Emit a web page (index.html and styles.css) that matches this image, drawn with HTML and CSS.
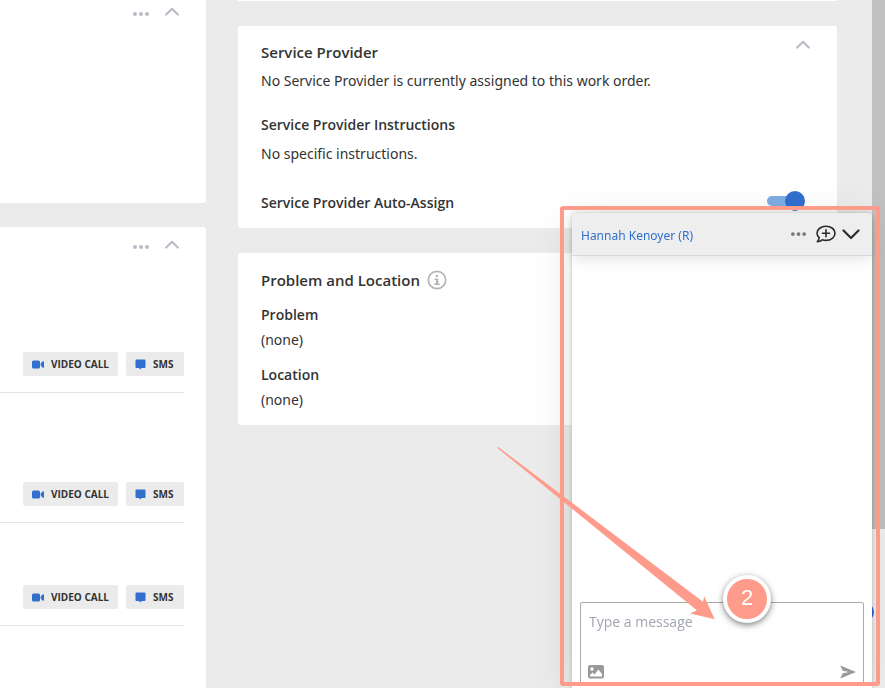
FILE: index.html
```html
<!DOCTYPE html>
<html lang="en">
<head>
<meta charset="utf-8">
<meta name="viewport" content="width=device-width, initial-scale=1">
<title>Work order</title>
<link rel="stylesheet" href="styles.css">
</head>
<body>
<svg class="sprite" aria-hidden="true">
  <symbol id="dots" viewBox="0 0 16 4"><circle cx="2" cy="2" r="2"/><circle cx="8" cy="2" r="2"/><circle cx="14" cy="2" r="2"/></symbol>
  <symbol id="up" viewBox="0 0 14 9"><path d="M1.200 7.500 7 1.800l5.800 5.700" fill="none" stroke="currentColor" stroke-width="2.200" stroke-linecap="round" stroke-linejoin="round"/></symbol>
  <symbol id="video" viewBox="0 0 12 9"><rect x="0" y="0.500" width="8" height="8" rx="1.500"/><path d="M8.700 3.300 10.900 1.300q1.100-.5 1.100.5v5.400q0 1-1.100.5L8.700 5.700z"/></symbol>
  <symbol id="sms" viewBox="0 0 11 11"><path d="M1.500 0.500h8q1 0 1 1v6.500q0 1-1 1H6.500L5.200 10.600 4 9H1.500q-1 0-1-1V1.500q0-1 1-1z"/></symbol>
</svg>
<div class="page">
  <aside class="side">
    <section class="panel panel-short">
      <div class="tools">
        <button class="icon" aria-label="More"><svg width="16" height="4"><use href="#dots"/></svg></button>
        <button class="icon" aria-label="Collapse"><svg width="14" height="9"><use href="#up"/></svg></button>
      </div>
    </section>
    <section class="panel panel-contacts">
      <div class="tools">
        <button class="icon" aria-label="More"><svg width="16" height="4"><use href="#dots"/></svg></button>
        <button class="icon" aria-label="Collapse"><svg width="14" height="9"><use href="#up"/></svg></button>
      </div>
      <div class="contact">
        <button class="action"><svg width="12" height="9"><use href="#video"/></svg>VIDEO CALL</button>
        <button class="action"><svg width="11" height="11"><use href="#sms"/></svg>SMS</button>
      </div>
      <div class="contact">
        <button class="action"><svg width="12" height="9"><use href="#video"/></svg>VIDEO CALL</button>
        <button class="action"><svg width="11" height="11"><use href="#sms"/></svg>SMS</button>
      </div>
      <div class="contact contact-compact">
        <button class="action"><svg width="12" height="9"><use href="#video"/></svg>VIDEO CALL</button>
        <button class="action"><svg width="11" height="11"><use href="#sms"/></svg>SMS</button>
      </div>
    </section>
  </aside>
  <main class="main">
    <div class="card-end"></div>
    <section class="card">
      <div class="card-head">
        <h2>Service Provider</h2>
        <button class="icon" aria-label="Collapse"><svg width="14" height="9"><use href="#up"/></svg></button>
      </div>
      <p class="spaced">No Service Provider is currently assigned to this work order.</p>
      <h3 class="group">Service Provider Instructions</h3>
      <p class="spaced">No specific instructions.</p>
      <div class="assign">
        <label for="auto">Service Provider Auto-Assign</label>
        <input id="auto" class="toggle" type="checkbox" checked>
      </div>
    </section>
    <section class="card">
      <div class="card-head card-head-info">
        <h2>Problem and Location</h2>
        <svg class="info" width="20" height="20" viewBox="0 0 20 20"><circle cx="10" cy="10" r="8.700" fill="none" stroke="currentColor" stroke-width="1.700"/><path d="M8.800 5h2.400v2H8.800zM7.500 8.500h3.700v5h1.500V15H7.300v-1.500h1.600V10H7.500z" fill="currentColor"/></svg>
      </div>
      <h3 class="field">Problem</h3>
      <p class="value">(none)</p>
      <h3 class="field">Location</h3>
      <p class="value">(none)</p>
    </section>
  </main>
  <div class="scrollbar"><div class="thumb"></div></div>
</div>
<div class="peek"></div>
<section class="chat">
  <header class="chat-head">
    <a href="#chat">Hannah Kenoyer (R)</a>
    <button class="icon more" aria-label="More"><svg width="15" height="4"><use href="#dots"/></svg></button>
    <button class="icon dark" aria-label="New message"><svg width="20" height="18" viewBox="0 0 20 18" fill="none" stroke="currentColor" stroke-width="1.600" stroke-linejoin="round" stroke-linecap="round"><path d="M3.200 12.700C1.700 11.400 1 9.900 1 8.300 1 4.300 5 1.200 10 1.200s9 3.100 9 7.100-4 7.100-9 7.100c-1.300 0-2.500-.2-3.600-.6-1.400 1.100-3 1.900-5.100 2 1-1.300 1.800-2.600 1.900-4.100z"/><path d="M10 4.800v7M6.500 8.300h7"/></svg></button>
    <button class="icon dark" aria-label="Minimize"><svg width="18" height="11" viewBox="0 0 18 11"><path d="M1.500 1.500 9 9l7.500-7.500" fill="none" stroke="currentColor" stroke-width="2.200" stroke-linecap="round" stroke-linejoin="round"/></svg></button>
  </header>
  <div class="messages"></div>
  <form class="compose">
    <textarea aria-label="Type a message" placeholder="Type a message"></textarea>
    <div class="compose-tools">
      <button type="button" class="icon" aria-label="Add image"><svg width="16" height="14" viewBox="0 0 16 14"><path fill-rule="evenodd" d="M2 0h12q2 0 2 2v9.500q0 2-2 2H2q-2 0-2-2V2Q0 0 2 0zM4 2.300a1.700 1.700 0 1 0 0 3.400 1.700 1.700 0 0 0 0-3.400zM2 11.500h12V9l-3.700-4.500-3.600 5L4.500 7.500 2 10z"/></svg></button>
      <button type="button" class="icon" aria-label="Send"><svg width="16" height="14" viewBox="0 0 16 14"><path d="M.2.500 16 7 .2 13.500 2.800 8.200 9 7 2.800 5.800z"/></svg></button>
    </div>
  </form>
</section>
<div class="callout">
  <svg class="arrow" width="218" height="174" viewBox="0 0 218 174"><path d="M1.200 0 206 154.700 207.200 149.300 217.700 172.300 193.200 166.600 199.700 163.200.2.800Z"/></svg>
  <span class="step">2</span>
</div>
</body>
</html>
```
FILE: styles.css
```css
* { box-sizing: border-box; }
body {
  margin: 0;
  height: 100vh;
  overflow: hidden;
  background: #ebebeb;
  color: #333;
  font: 14px/24px "Open Sans", "Noto Sans", sans-serif;
}
h2, h3, p { margin: 0; }
p, .chat-head a { font-family: "Noto Sans", "Open Sans", sans-serif; }
h2 { font-size: 15px; line-height: 24px; font-weight: 600; }
h3, label { font-size: 14px; line-height: 24px; font-weight: 600; }
button { font-family: inherit; border: 0; cursor: pointer; }
.sprite { display: none; }
.icon {
  display: flex;
  padding: 0;
  background: none;
  color: #b8bcc4;
  fill: currentColor;
}

.page { display: flex; height: 100vh; }
.side {
  flex: 0 0 206px;
  display: flex;
  flex-direction: column;
  gap: 24px;
}
.panel { background: #fff; padding-right: 22px; }
.panel-short { height: 203px; border-radius: 0 0 3px 0; }
.panel-contacts { flex: 1; border-radius: 0 3px 0 0; }
.tools {
  display: flex;
  justify-content: flex-end;
  align-items: flex-end;
  gap: 16px;
  padding: 7px 5px 0 0;
}
.panel-contacts .tools { height: 36px; padding: 0 5px 14px 0; }
.contact {
  display: flex;
  justify-content: flex-end;
  align-items: flex-end;
  gap: 8px;
  height: 130px;
  padding-bottom: 16px;
  border-bottom: 1px solid #e4e4e4;
}
.contact-compact { height: 103px; }
.action {
  display: flex;
  align-items: center;
  gap: 7px;
  min-width: 58px;
  height: 24px;
  padding: 0 9px;
  border-radius: 2px;
  background: #ebebeb;
  color: #333;
  font-size: 10px;
  font-weight: 700;
}
.action svg { fill: #306fce; }

.main {
  flex: 1;
  display: flex;
  flex-direction: column;
  gap: 25px;
  padding: 0 35px 0 32px;
}
.card-end { height: 1px; background: #fff; }
.card {
  padding: 14px 32px 13px 23px;
  border-radius: 3px;
  background: #fff;
}
.card-head { display: flex; justify-content: space-between; align-items: flex-start; }
.card-head .icon { margin-right: -5px; }
.card-head-info {
  justify-content: flex-start;
  align-items: center;
  gap: 7px;
  padding-top: 1px;
}
.info { color: #b5b5b5; }
.spaced { margin-top: 5px; }
.group { margin-top: 20px; }
.field { margin-top: 11px; }
.value { margin-top: 1px; }
.assign {
  display: flex;
  justify-content: space-between;
  align-items: center;
  margin-top: 25px;
}
.toggle {
  appearance: none;
  position: relative;
  width: 38px;
  height: 20px;
  margin: 0 0 4px;
}
.toggle::before {
  content: "";
  position: absolute;
  inset: 5px 4px 5px 0;
  border-radius: 5px;
  background: #7fade4;
}
.toggle::after {
  content: "";
  position: absolute;
  top: 0;
  right: 0;
  width: 20px;
  height: 20px;
  border-radius: 50%;
  background: #306fce;
}
.scrollbar { width: 13px; background: #f1f1f1; }
.thumb { height: 529px; background: #c1c1c1; }

.peek {
  position: fixed;
  right: 11px;
  bottom: 66px;
  width: 20px;
  height: 20px;
  border-radius: 50%;
  background: #306fce;
}
.chat {
  position: fixed;
  top: 213px;
  right: 13px;
  bottom: 0;
  width: 300px;
  display: flex;
  flex-direction: column;
  border-radius: 4px 4px 0 0;
  background: #fff;
  box-shadow: 0 0 4px rgba(0, 0, 0, .2), 0 8px 40px rgba(0, 0, 0, .12);
}
.chat-head {
  display: flex;
  align-items: center;
  gap: 6px;
  height: 43px;
  padding: 0 12px 0 9px;
  border-bottom: 1px solid #d6d8dd;
  border-radius: 4px 4px 0 0;
  background: #eee;
  box-shadow: 0 4px 14px rgba(0, 0, 0, .1);
}
.chat-head a {
  flex: 1;
  padding-top: 3px;
  color: #306fce;
  font-size: 12px;
  text-decoration: none;
}
.more { margin-right: 4px; color: #777; }
.dark { color: #2b2b2b; }
.messages { flex: 1; }
.compose {
  display: flex;
  flex-direction: column;
  height: 83px;
  margin: 0 8px 3px;
  padding: 8px 7px 5px 7px;
  border: 1px solid #aaa;
  border-radius: 2px;
}
.compose textarea {
  flex: 1;
  width: 100%;
  min-height: 0;
  padding: 0 1px;
  border: 0;
  outline: 0;
  resize: none;
  background: none;
  font: 14px/22px "Open Sans", "Noto Sans", sans-serif;
}
.compose textarea::placeholder { color: #a0a5b0; }
.compose-tools { display: flex; justify-content: space-between; }
.compose-tools .icon { color: #999; }

.callout {
  position: fixed;
  top: 206px;
  right: 5px;
  bottom: 2px;
  width: 320px;
  border: 4px solid #ff9b8a;
  border-radius: 3px;
  pointer-events: none;
}
.arrow {
  position: absolute;
  right: 161px;
  bottom: 61px;
  fill: #ff9b8a;
}
.step {
  position: absolute;
  right: 105px;
  bottom: 59px;
  width: 48px;
  height: 48px;
  border: 4px solid #fff;
  border-radius: 50%;
  background: #ff9b8a;
  color: #fff;
  font: 22px/38px "Liberation Sans", sans-serif;
  text-align: center;
  box-shadow: 0 2px 6px rgba(0, 0, 0, .5);
}
```
